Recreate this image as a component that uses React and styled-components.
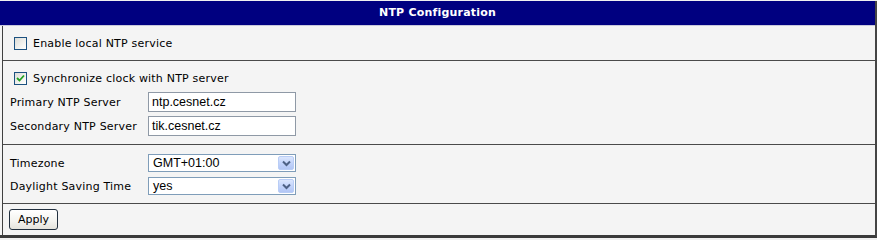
import React from 'react';
import styled, { createGlobalStyle } from 'styled-components';

const GlobalStyle = createGlobalStyle`
  html, body {
    margin: 0;
    padding: 0;
    background: #f0f0f0;
  }
  body {
    font-family: "DejaVu Sans", Verdana, sans-serif;
    font-size: 11px;
    letter-spacing: 0.2px;
    color: #000;
  }
`;

const labelWidth = 138;

const App = () => {
  return (
    <>
      <GlobalStyle />
      <Panel>
        <Header>NTP Configuration</Header>

        <Body>
          <Section pad="11px 0 10px 11px">
            <CheckRow>
              <CheckBox />
              <span>Enable local NTP service</span>
            </CheckRow>
          </Section>

          <Section pad="11px 0 7px 11px">
            <CheckRow>
              <CheckBox checked />
              <span>Synchronize clock with NTP server</span>
            </CheckRow>
          </Section>
          <Section pad="0 0 8px 7px" flush>
            <FieldList gap={4}>
              <FieldRow>
                <Label>Primary NTP Server</Label>
                <TextInput>ntp.cesnet.cz</TextInput>
              </FieldRow>
              <FieldRow>
                <Label>Secondary NTP Server</Label>
                <TextInput>tik.cesnet.cz</TextInput>
              </FieldRow>
            </FieldList>
          </Section>

          <Section pad="9px 0 8px 7px">
            <FieldList gap={5}>
              <FieldRow>
                <Label>Timezone</Label>
                <Select value="GMT+01:00" />
              </FieldRow>
              <FieldRow>
                <Label>Daylight Saving Time</Label>
                <Select value="yes" />
              </FieldRow>
            </FieldList>
          </Section>

          <Section pad="5px 0 5px 6px">
            <Button>Apply</Button>
          </Section>
        </Body>
      </Panel>
    </>
  );
};

const CheckBox = ({ checked }) => (
  <Box>
    {checked && (
      <svg width="9" height="9" viewBox="0 0 9 9">
        <path d="M1 4 L3.5 6.5 L8 1.5" fill="none" stroke="#21a121" strokeWidth="1.8" />
      </svg>
    )}
  </Box>
);

const Select = ({ value }) => (
  <SelectBox>
    <SelectText>{value}</SelectText>
    <DropButton>
      <svg width="9" height="7" viewBox="0 0 9 7">
        <path d="M1 1.5 L4.5 5 L8 1.5" fill="none" stroke="#4d6185" strokeWidth="2" />
      </svg>
    </DropButton>
  </SelectBox>
);

export default App;

const Panel = styled.div`
  width: 875px;
  margin-top: 1px;
  border-right: 2px solid #454545;
  border-bottom: 3px solid #3a3a3a;
  background: #f4f4f4;
`;

const Header = styled.div`
  height: 24px;
  line-height: 24px;
  background: #000080;
  color: #fff;
  font-weight: bold;
  text-align: center;
  border-bottom: 1px solid #c8c8dc;
`;

const Body = styled.div`
  margin-left: 2px;
  border-left: 1px solid #404040;
`;

const Section = styled.div`
  padding: ${p => p.pad};
  border-top: ${p => (p.flush ? 'none' : '1px solid #4a4a4a')};
  &:first-child {
    border-top: none;
  }
`;

const CheckRow = styled.div`
  display: flex;
  align-items: center;
  gap: 6px;
  height: 13px;
`;

const Box = styled.span`
  width: 11px;
  height: 11px;
  border: 1px solid #1c5180;
  background: linear-gradient(135deg, #dcdcd7 0%, #f6f6f3 70%, #ffffff 100%);
  display: flex;
  align-items: center;
  justify-content: center;
`;

const FieldList = styled.div`
  display: flex;
  flex-direction: column;
  gap: ${p => p.gap}px;
`;

const FieldRow = styled.div`
  display: flex;
  align-items: center;
`;

const Label = styled.div`
  width: ${labelWidth}px;
`;

const TextInput = styled.div`
  box-sizing: border-box;
  width: 148px;
  height: 20px;
  border: 1px solid #8f99a6;
  background: #fff;
  font-family: "Liberation Sans", Arial, sans-serif;
  font-size: 12.5px;
  letter-spacing: 0;
  line-height: 18px;
  padding-left: 3px;
`;

const SelectBox = styled.div`
  box-sizing: border-box;
  width: 148px;
  height: 18px;
  border: 1px solid #7f9db9;
  background: #fff;
  display: flex;
  align-items: center;
  justify-content: space-between;
  padding: 0 1px 0 4px;
`;

const SelectText = styled.span`
  font-family: "Liberation Sans", Arial, sans-serif;
  font-size: 12.5px;
  letter-spacing: 0;
`;

const DropButton = styled.span`
  box-sizing: border-box;
  width: 16px;
  height: 14px;
  border: 1px solid #b9cdf6;
  border-radius: 2px;
  background: linear-gradient(180deg, #dbe6fd 0%, #c3d4fb 50%, #b2c6f5 100%);
  display: flex;
  align-items: center;
  justify-content: center;
`;

const Button = styled.button`
  width: 49px;
  height: 21px;
  border: 1px solid #22303f;
  border-radius: 3px;
  background: linear-gradient(180deg, #ffffff 0%, #f3f3ef 60%, #e4e3dc 100%);
  font-family: "DejaVu Sans", Verdana, sans-serif;
  font-size: 11px;
  color: #000;
  padding: 0;
`;
